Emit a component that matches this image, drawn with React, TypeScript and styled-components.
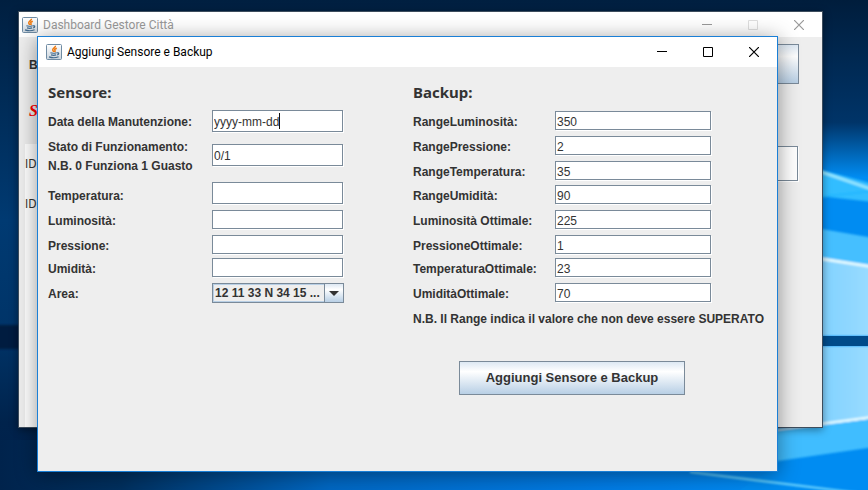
import React from 'react';
import styled, { createGlobalStyle } from 'styled-components';

const Global = createGlobalStyle`
  * { box-sizing: border-box; }
  body { margin: 0; overflow: hidden; }
`;

const Desktop = styled.main`
  position: relative;
  height: 100vh;
  overflow: hidden;
  background: #002248;
  color: #333;
  font-family: "Liberation Sans", Arial, sans-serif;
`;

const Wallpaper = styled.svg`
  position: absolute;
  inset: 0;
  width: 100%;
  height: 100%;
`;

const Window = styled.section<{ $active?: boolean }>`
  position: absolute;
  top: ${p => (p.$active ? 36 : 11)}px;
  right: ${p => (p.$active ? 90 : 45)}px;
  bottom: ${p => (p.$active ? 18 : 62)}px;
  left: ${p => (p.$active ? 37 : 18)}px;
  display: flex;
  flex-direction: column;
  overflow: ${p => (p.$active ? 'visible' : 'hidden')};
  border: 1px solid ${p => (p.$active ? '#1a7fd6' : '#3d4d5d')};
  background: #eee;
  box-shadow: ${p => (p.$active ? '0 3px 20px rgba(0, 0, 0, 0.42)' : '0 2px 8px rgba(0, 0, 0, 0.4)')};
`;

const TitleBar = styled.header<{ $active?: boolean }>`
  display: flex;
  align-items: center;
  gap: 5px;
  height: ${p => (p.$active ? 30 : 25)}px;
  padding-left: ${p => (p.$active ? 8 : 3)}px;
  background: #fff;
  color: ${p => (p.$active ? '#000' : '#999')};
  font-family: Roboto, "Noto Sans", sans-serif;
`;

const WindowTitle = styled.h1`
  flex: 1;
  margin: 0;
  font-size: 12px;
  line-height: 16px;
  font-weight: 400;
  white-space: nowrap;
`;

const Controls = styled.div`
  display: flex;
  height: 100%;
`;

const ControlButton = styled.button<{ $faint?: boolean }>`
  display: grid;
  place-items: center;
  width: 46px;
  padding: 0;
  border: 0;
  background: none;
  color: inherit;
  opacity: ${p => (p.$faint ? 0.3 : 1)};
`;

const BackContent = styled.div`
  flex: 1;
  display: flex;
  flex-direction: column;
  font-size: 12px;
  line-height: 16px;
`;

const BackHeader = styled.div`
  display: flex;
  justify-content: space-between;
  height: 60px;
  padding: 7px 23px 0 10px;
`;

const BackTitle = styled.strong`
  padding-top: 13px;
`;

const BackButton = styled.button`
  width: 120px;
  height: 40px;
  border: 1px solid #7a8a99;
  background: linear-gradient(#dde8f3, #fff 30%, #b8cfe5);
`;

const Alert = styled.em`
  height: 47px;
  padding: 6px 0 0 10px;
  color: #f00;
  font-family: "Liberation Serif", serif;
  font-size: 16px;
  font-weight: 700;
`;

const BackBody = styled.div`
  flex: 1;
  display: flex;
  justify-content: space-between;
  padding: 0 24px 0 6px;
`;

const IdList = styled.ul`
  flex: 1;
  margin: 0 40px 0 0;
  padding: 12px 0 0;
  background: #fff;
  font-family: "DejaVu Sans Condensed", "DejaVu Sans", sans-serif;
  font-size: 12px;
  list-style: none;
`;

const IdItem = styled.li`
  height: 40px;
`;

const BackField = styled.input`
  width: 200px;
  height: 35px;
  margin-top: 2px;
  border: 1px solid #7a8a99;
  background: #fff;
  box-shadow: 1px 1px 0 #fff;
`;

const Form = styled.form`
  flex: 1;
  display: grid;
  grid-template-columns: 365px 1fr;
  padding: 15px 10px 0;
  font-size: 12px;
  line-height: 16px;
`;

const Column = styled.div`
  display: flex;
  flex-direction: column;
`;

const Heading = styled.h2<{ $gap: number }>`
  margin: 0 0 ${p => p.$gap}px;
  font-family: "Noto Sans", "DejaVu Sans", sans-serif;
  font-size: 15px;
  line-height: 20px;
`;

const Row = styled.div<{ $h: number; $label: number }>`
  display: grid;
  grid-template-columns: ${p => p.$label}px auto;
  justify-content: start;
  align-items: start;
  height: ${p => p.$h}px;
`;

const Label = styled.label<{ $top?: number; $double?: boolean }>`
  padding-top: ${p => p.$top ?? 4}px;
  font-weight: 700;
  white-space: pre-line;
  line-height: ${p => (p.$double ? 19 : 16)}px;
`;

const FieldBox = styled.div<{ $top?: number }>`
  position: relative;
  display: flex;
  margin-top: ${p => p.$top ?? 1}px;
`;

const Field = styled.input<{ $tall?: boolean; $w: number }>`
  width: ${p => p.$w}px;
  height: ${p => (p.$tall ? 22 : 19)}px;
  padding: 2px 1px 0;
  border: 1px solid #7a8a99;
  border-radius: 0;
  outline: 0;
  background: #fff;
  box-shadow: 1px 1px 0 #fff;
  color: #333;
  font: 12px/16px "Liberation Sans", Arial, sans-serif;
`;

const Caret = styled.span`
  position: absolute;
  top: 3px;
  left: 67px;
  width: 1px;
  height: 16px;
  background: #111;
`;

const SelectBox = styled.div`
  position: relative;
  display: grid;
  width: 132px;
  height: 20px;
  margin-top: 1px;
  color: #333;
`;

const Select = styled.select`
  appearance: none;
  width: 100%;
  height: 100%;
  padding: 0 20px 1px 2px;
  border: 1px solid #7a8a99;
  border-radius: 0;
  outline: 0;
  background: #eee;
  box-shadow: inset 0 0 0 1px #b8cfe5;
  color: inherit;
  font: 700 12px/16px "Liberation Sans", Arial, sans-serif;
`;

const SelectArrow = styled.span`
  position: absolute;
  top: 0;
  right: 0;
  display: grid;
  place-items: center;
  width: 20px;
  height: 20px;
  border: 1px solid #7a8a99;
  background: linear-gradient(#dde8f3, #fff 30%, #b8cfe5);
  pointer-events: none;
`;

const Note = styled.p`
  margin: 0;
  padding-top: 4px;
  font-weight: 700;
  white-space: nowrap;
`;

const SubmitButton = styled.button`
  width: 226px;
  height: 34px;
  margin: 34px 0 0 46px;
  padding: 0;
  border: 1px solid #7a8a99;
  background: linear-gradient(#dde8f3, #fff 30%, #b8cfe5);
  color: #333;
  font: 700 13px/16px "Liberation Sans", Arial, sans-serif;
`;

const JavaIcon = () => (
  <svg width="16" height="16" viewBox="0 0 16 16" aria-hidden="true">
    <defs>
      <linearGradient id="cup-tile" x1="0" y1="0" x2="0" y2="1">
        <stop offset="0" stopColor="#fff" />
        <stop offset="1" stopColor="#c9d3dc" />
      </linearGradient>
    </defs>
    <rect x=".5" y=".5" width="15" height="15" rx="1" fill="url(#cup-tile)" stroke="#6f8ba3" />
    <path d="M9.4 1.8c.6 1.8-3.6 2.6-2.6 4.5.3.6.9.9 1 1.7M10.8 4.2C8.8 5 8.2 5.6 9 6.5c.5.7 0 1.1-.4 1.5" fill="none" stroke="#ee7a10" strokeWidth="1.5" />
    <path d="M4.4 8.8c1.8.6 4.2.5 6.2-.1M5 10.9c1.7.5 3.6.5 5.2 0M3 12.9c2.4.9 7 .9 9.6-.1M10.9 8.9c2.4-.6 2.4 1.5.2 2.1" fill="none" stroke="#41698c" strokeWidth="1.2" />
  </svg>
);

const WindowControls = ({ active = false }: { active?: boolean }) => (
  <Controls>
    <ControlButton type="button" aria-label="Riduci a icona">
      <svg width="10" height="10" viewBox="0 0 10 10"><path d="M0 4.5h10" stroke="currentColor" /></svg>
    </ControlButton>
    <ControlButton type="button" aria-label="Ingrandisci" $faint={!active}>
      <svg width="10" height="10" viewBox="0 0 10 10"><path d="M.5.5h9v9h-9z" fill="none" stroke="currentColor" /></svg>
    </ControlButton>
    <ControlButton type="button" aria-label="Chiudi">
      <svg width="10" height="10" viewBox="0 0 10 10"><path d="M0 0l10 10M10 0L0 10" stroke="currentColor" strokeWidth="1.2" /></svg>
    </ControlButton>
  </Controls>
);

type FieldRow = {
  id: string;
  label: string;
  value?: string;
  height: number;
  tall?: boolean;
  double?: boolean;
  caret?: boolean;
  labelTop?: number;
  fieldTop?: number;
};

const sensorRows: FieldRow[] = [
  { id: 'data', label: 'Data della Manutenzione:', value: 'yyyy-mm-dd', height: 27, tall: true, caret: true, labelTop: 5 },
  { id: 'stato', label: 'Stato di Funzionamento:\nN.B. 0 Funziona 1 Guasto', value: '0/1', height: 45, tall: true, double: true, labelTop: 2, fieldTop: 8 },
  { id: 'temperatura', label: 'Temperatura:', height: 28, tall: true, labelTop: 7 },
  { id: 'luminosita', label: 'Luminosità:', height: 25 },
  { id: 'pressione', label: 'Pressione:', height: 23 },
  { id: 'umidita', label: 'Umidità:', height: 25 },
];

const backupRows: FieldRow[] = [
  { id: 'range-luminosita', label: 'RangeLuminosità:', value: '350', height: 25 },
  { id: 'range-pressione', label: 'RangePressione:', value: '2', height: 25 },
  { id: 'range-temperatura', label: 'RangeTemperatura:', value: '35', height: 24 },
  { id: 'range-umidita', label: 'RangeUmidità:', value: '90', height: 25 },
  { id: 'luminosita-ottimale', label: 'Luminosità Ottimale:', value: '225', height: 25 },
  { id: 'pressione-ottimale', label: 'PressioneOttimale:', value: '1', height: 23 },
  { id: 'temperatura-ottimale', label: 'TemperaturaOttimale:', value: '23', height: 25 },
  { id: 'umidita-ottimale', label: 'UmiditàOttimale:', value: '70', height: 25 },
];

const Rows = ({ rows, label, width }: { rows: FieldRow[]; label: number; width: number }) => (
  <>
    {rows.map(r => (
      <Row key={r.id} $h={r.height} $label={label}>
        <Label htmlFor={r.id} $top={r.labelTop} $double={r.double}>{r.label}</Label>
        <FieldBox $top={r.fieldTop}>
          <Field id={r.id} defaultValue={r.value} $tall={r.tall} $w={width} />
          {r.caret && <Caret />}
        </FieldBox>
      </Row>
    ))}
  </>
);

export default function App() {
  return (
    <Desktop>
      <Global />
      <Wallpaper viewBox="0 0 868 490" preserveAspectRatio="none" aria-hidden="true">
        <defs>
          <linearGradient id="night" x1="0" y1="0" x2="0" y2="1">
            <stop offset="0" stopColor="#001f40" />
            <stop offset=".45" stopColor="#003a72" />
            <stop offset=".68" stopColor="#003468" />
            <stop offset=".86" stopColor="#00234c" />
            <stop offset="1" stopColor="#00204a" />
          </linearGradient>
          <linearGradient id="floor" x1="0" y1="0" x2="1" y2="0">
            <stop offset="0" stopColor="#00234c" />
            <stop offset=".14" stopColor="#00305f" />
            <stop offset=".38" stopColor="#0068c4" />
            <stop offset=".7" stopColor="#007ce6" />
            <stop offset="1" stopColor="#0094fa" />
          </linearGradient>
          <linearGradient id="sky" x1="0" y1="0" x2="0" y2="1">
            <stop offset="0" stopColor="#001d3c" />
            <stop offset=".68" stopColor="#003468" />
            <stop offset="1" stopColor="#0090f8" />
          </linearGradient>
          <linearGradient id="pane" x1="0" y1="0" x2="1" y2="0">
            <stop offset="0" stopColor="#7cd0ff" />
            <stop offset="1" stopColor="#9bdcff" />
          </linearGradient>
          <filter id="soft"><feGaussianBlur stdDeviation="1" /></filter>
        </defs>
        <rect width="868" height="490" fill="url(#night)" />
        <rect x="-4" y="325" width="44" height="24" fill="#001d40" filter="url(#soft)" />
        <rect y="440" width="868" height="50" fill="url(#floor)" />
        <rect x="770" width="98" height="180" fill="url(#sky)" />
        <path d="M770 178h98v312H740l30-20z" fill="#008cf2" />
        <g filter="url(#soft)">
          <path d="M810 167l64 17v18l-64-7z" fill="#30bdff" />
          <path d="M810 168l64 22" stroke="#94e6ff" strokeWidth="3" />
          <path d="M810 198l64-7" stroke="#25b7ff" strokeWidth="2" />
          <path d="M810 227l64 11v31l-64-11z" fill="#45bfff" />
          <path d="M810 257l64 11v68h-64zM810 346h64v72l-64 9z" fill="url(#pane)" />
          <path d="M810 257l64 10M764 432l110-15" stroke="#e4faff" strokeWidth="3" />
          <path d="M764 432l110-13v28l-110 16z" fill="#3fbdff" />
          <path d="M690 472l184 23" stroke="#6cd4ff" strokeWidth="2" />
        </g>
        <rect x="822" y="336" width="46" height="10" fill="#004b8a" />
      </Wallpaper>

      <Window>
        <TitleBar>
          <JavaIcon />
          <WindowTitle>Dashboard Gestore Città</WindowTitle>
          <WindowControls />
        </TitleBar>
        <BackContent>
          <BackHeader>
            <BackTitle>B</BackTitle>
            <BackButton type="button" aria-label="Azione" />
          </BackHeader>
          <Alert>S</Alert>
          <BackBody>
            <IdList>
              <IdItem>ID</IdItem>
              <IdItem>ID</IdItem>
            </IdList>
            <BackField aria-label="Valore" />
          </BackBody>
        </BackContent>
      </Window>

      <Window $active>
        <TitleBar $active>
          <JavaIcon />
          <WindowTitle>Aggiungi Sensore e Backup</WindowTitle>
          <WindowControls active />
        </TitleBar>
        <Form onSubmit={e => e.preventDefault()}>
          <Column>
            <Heading $gap={7}>Sensore:</Heading>
            <Rows rows={sensorRows} label={164} width={131} />
            <Row $h={25} $label={164}>
              <Label htmlFor="area">Area:</Label>
              <SelectBox>
                <Select id="area"><option>12 11 33 N 34 15 ...</option></Select>
                <SelectArrow><svg width="10" height="5" viewBox="0 0 10 5"><path d="M0 0h10L5 5z" fill="#333" /></svg></SelectArrow>
              </SelectBox>
            </Row>
          </Column>
          <Column>
            <Heading $gap={8}>Backup:</Heading>
            <Rows rows={backupRows} label={142} width={156} />
            <Note>N.B. Il Range indica il valore che non deve essere SUPERATO</Note>
            <SubmitButton type="submit">Aggiungi Sensore e Backup</SubmitButton>
          </Column>
        </Form>
      </Window>
    </Desktop>
  );
}
